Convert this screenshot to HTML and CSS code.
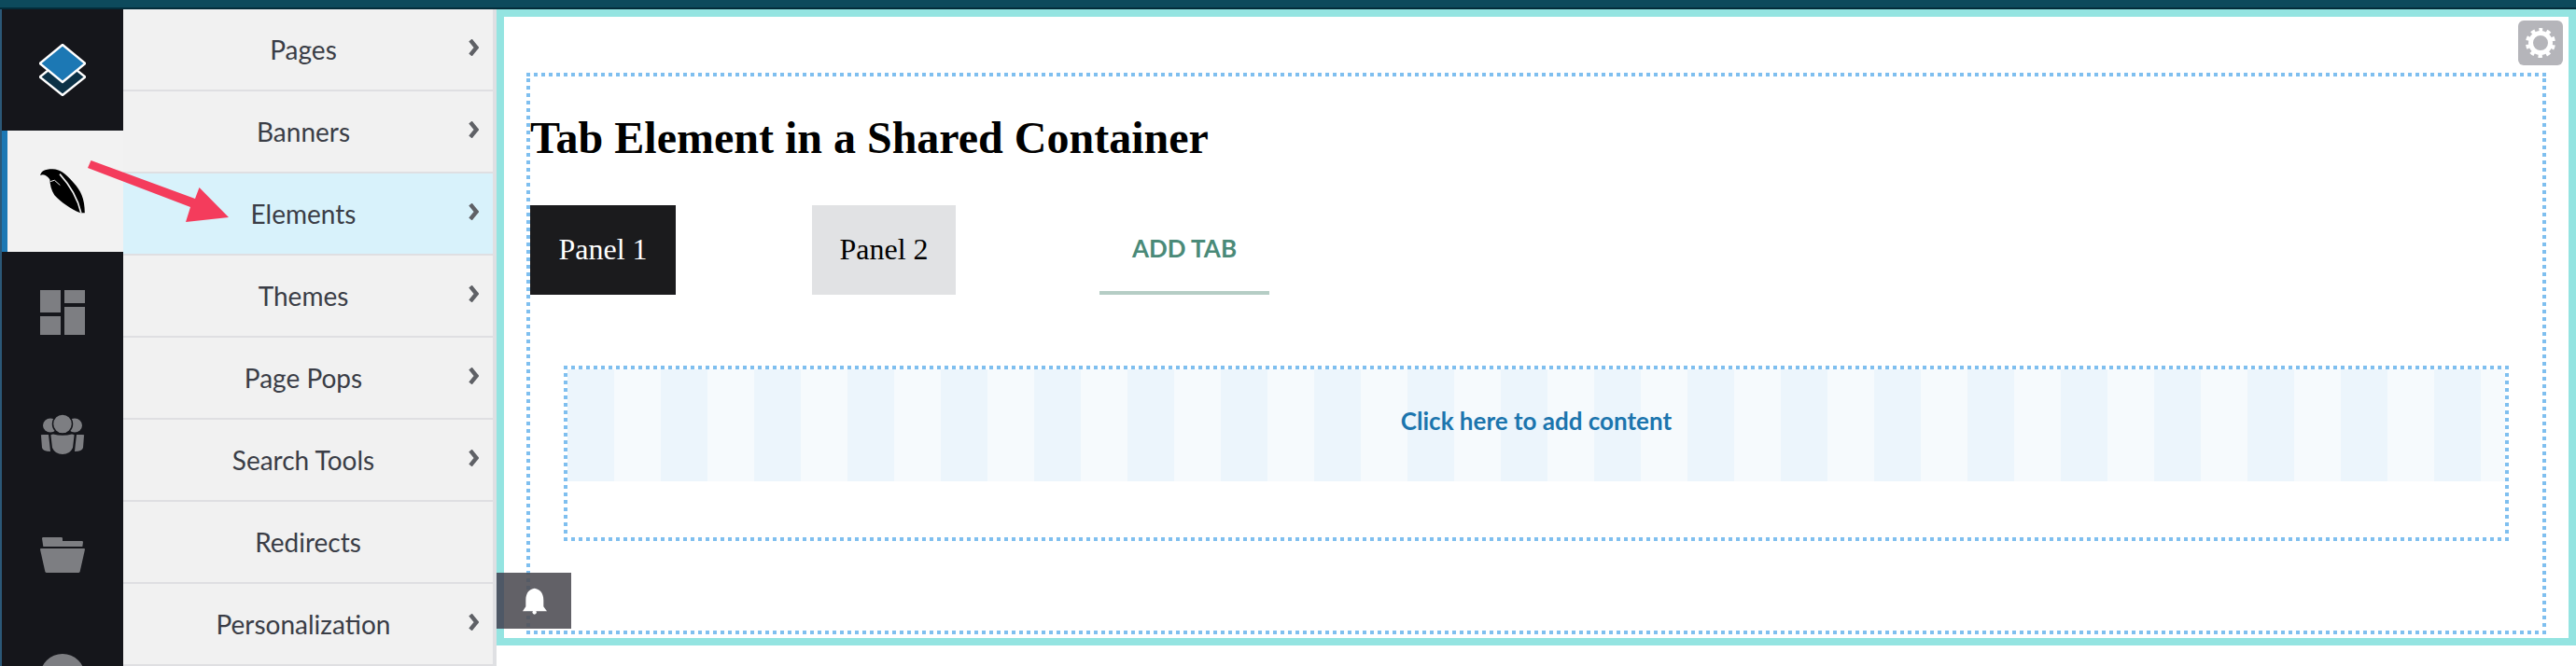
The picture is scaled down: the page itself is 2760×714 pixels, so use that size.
FILE: index.html
```html
<!DOCTYPE html>
<html lang="en">
<head>
    <meta charset="UTF-8">
    <title>Tab Element in a Shared Container</title>
    <link rel="stylesheet" href="styles.css">
</head>
<body>
    <div class="topbar"></div>
    <div class="shell">
        <div class="edge"></div>

        <div class="sidebar">
            <div class="side-item">
                <svg width="50" height="56" viewBox="0 0 50 56">
                    <path d="M25 16 L49.4 35.5 L25 55 L0.6 35.5 Z" fill="#0c3247" stroke="#fff" stroke-width="2.4" stroke-linejoin="round"/>
                    <path d="M25 1 L49.4 21 L25 41 L0.6 21 Z" fill="#1c78b4" stroke="#fff" stroke-width="2.4" stroke-linejoin="round"/>
                </svg>
            </div>
            <div class="side-item active">
                <svg width="48" height="48" viewBox="132 155 144 145">
                    <path d="M132 176 C134 164 145 156 172 156 C196 156 212 170 240 200 C262 224 276 250 276 298 L262 298 C232 285 198 262 178 240 C168 226 163 205 163 190 C156 180 146 170 132 176 Z" fill="#000"/>
                    <path d="M195 172 C225 205 252 245 264 298" fill="none" stroke="#f2f2f2" stroke-width="5"/>
                    <path d="M165 196 L178 192 L196 208" fill="none" stroke="#f2f2f2" stroke-width="3"/>
                </svg>
            </div>
            <div class="side-item">
                <svg width="48" height="48" viewBox="0 0 48 48" fill="#7d7e82">
                    <rect x="0" y="0" width="22" height="24"/>
                    <rect x="26" y="0" width="22" height="14"/>
                    <rect x="0" y="28" width="22" height="20"/>
                    <rect x="26" y="18" width="22" height="30"/>
                </svg>
            </div>
            <div class="side-item">
                <svg width="48" height="43" viewBox="0 0 48 43" fill="#7d7e82">
                    <ellipse cx="11" cy="12" rx="8" ry="7.5"/>
                    <ellipse cx="37" cy="12" rx="8" ry="7.5"/>
                    <circle cx="24" cy="10.5" r="10.5" stroke="#15161b" stroke-width="1.5"/>
                    <path d="M1 23 Q0 22 3 22 L9 22 Q10 30 11 40 Q3 40 2 36 Z"/>
                    <path d="M47 23 Q48 22 45 22 L39 22 Q38 30 37 40 Q45 40 46 36 Z"/>
                    <path d="M11.5 23 Q11 21.5 14 21.5 Q24 24 34 21.5 Q37 21.5 36.5 23 L35 36 Q32 43 24 43 Q16 43 13 36 Z"/>
                </svg>
            </div>
            <div class="side-item">
                <svg width="48" height="38" viewBox="132 108 144 114" fill="#7d7e82">
                    <path d="M138 112 Q138 108 142 108 L200 108 Q204 108 204 112 L204 120 L266 120 Q270 120 270 124 L268 138 L142 138 Z"/>
                    <path d="M132 147 Q132 144 135 144 L273 144 Q276 144 276 147 L260 218 Q259 222 255 222 L153 222 Q149 222 148 218 Z"/>
                </svg>
            </div>
            <div class="side-item">
                <svg width="48" height="48" viewBox="0 0 48 48" fill="#7d7e82">
                    <circle cx="24" cy="24" r="24"/>
                </svg>
            </div>
        </div>

        <div class="menu">
            <div class="menu-row">
                <span class="menu-label has-arrow">Pages</span>
                <svg class="chev" width="11" height="18" viewBox="0 0 11 18"><path d="M2 1 L8.5 9 L2 17"/></svg>
            </div>
            <div class="menu-row">
                <span class="menu-label has-arrow">Banners</span>
                <svg class="chev" width="11" height="18" viewBox="0 0 11 18"><path d="M2 1 L8.5 9 L2 17"/></svg>
            </div>
            <div class="menu-row current">
                <span class="menu-label has-arrow">Elements</span>
                <svg class="chev" width="11" height="18" viewBox="0 0 11 18"><path d="M2 1 L8.5 9 L2 17"/></svg>
            </div>
            <div class="menu-row">
                <span class="menu-label has-arrow">Themes</span>
                <svg class="chev" width="11" height="18" viewBox="0 0 11 18"><path d="M2 1 L8.5 9 L2 17"/></svg>
            </div>
            <div class="menu-row">
                <span class="menu-label has-arrow">Page Pops</span>
                <svg class="chev" width="11" height="18" viewBox="0 0 11 18"><path d="M2 1 L8.5 9 L2 17"/></svg>
            </div>
            <div class="menu-row">
                <span class="menu-label has-arrow">Search Tools</span>
                <svg class="chev" width="11" height="18" viewBox="0 0 11 18"><path d="M2 1 L8.5 9 L2 17"/></svg>
            </div>
            <div class="menu-row">
                <span class="menu-label">Redirects</span>
            </div>
            <div class="menu-row">
                <span class="menu-label has-arrow">Personalization</span>
                <svg class="chev" width="11" height="18" viewBox="0 0 11 18"><path d="M2 1 L8.5 9 L2 17"/></svg>
            </div>
        </div>

        <div class="stage">
            <div class="frame">
                <div class="gear">
                    <svg width="32" height="32" viewBox="0 0 32 32" fill="none" stroke="#fff">
                        <circle cx="16" cy="16" r="10.5" stroke-width="5"/>
                        <circle cx="16" cy="16" r="14" stroke-width="4" stroke-dasharray="4.4 4.4" stroke-dashoffset="2.2" transform="rotate(-90 16 16)"/>
                    </svg>
                </div>

                <div class="container dots">
                    <h1>Tab Element in a Shared Container</h1>
                    <div class="tabs">
                        <div class="tab tab-on">Panel 1</div>
                        <div class="tab tab-off">Panel 2</div>
                        <div class="tab-add">ADD TAB</div>
                    </div>
                    <div class="dropzone dots">
                        <div class="stripes">Click here to add content</div>
                    </div>
                </div>

                <div class="bell">
                    <svg width="26" height="29" viewBox="120 88 78 86" fill="#fff">
                        <path d="M158 90 C142 92 130 104 130 128 L130 148 L120 163 L198 163 L187 148 L187 128 C187 104 174 92 158 90 Z"/>
                        <circle cx="158" cy="167" r="6.5"/>
                    </svg>
                </div>
            </div>
        </div>
    </div>

    <svg class="arrow" width="250" height="240" viewBox="0 0 250 240">
        <polygon points="97.5,172 209,213 213.5,201 245,233 199,238 204,222 94,180" fill="#f43c5c"/>
    </svg>
</body>
</html>
```

FILE: styles.css
```css
html, body {
    margin: 0;
    padding: 0;
    height: 714px;
    overflow: hidden;
    background-color: #fff;
}
body {
    position: relative;
    font-family: "Lato", sans-serif;
}
.topbar {
    height: 8px;
    background-color: #0d4a5c;
    border-bottom: 2px solid #032c3a;
}
.shell {
    display: flex;
    height: 704px;
    overflow: hidden;
}
.edge {
    width: 2px;
    background-color: #2b5878;
}

/* dark icon column */
.sidebar {
    width: 130px;
    background-color: #15161b;
    overflow: hidden;
}
.side-item {
    height: 130px;
    display: flex;
    align-items: center;
    justify-content: center;
    box-sizing: border-box;
}
.side-item.active {
    background-color: #f2f2f2;
    border-left: 6px solid #1c78b4;
    padding-right: 6px;
}

/* menu column */
.menu {
    width: 396px;
    background-color: #f1f1f1;
    border-right: 4px solid #dfe0e3;
}
.menu-row {
    height: 88px;
    box-sizing: border-box;
    display: flex;
    align-items: center;
    border-bottom: 2px solid #dfdfe2;
    color: #3a3d46;
    font-size: 28px;
}
.menu-row.current {
    background-color: #d8f2fb;
}
.menu-label {
    flex: 1;
    text-align: center;
}
.menu-label.has-arrow {
    padding-left: 16px;
}
.chev {
    margin-right: 15px;
    margin-top: -5px;
    fill: none;
    stroke: #5f6166;
    stroke-width: 4.4;
    stroke-linejoin: miter;
}

/* page preview */
.stage {
    flex: 1;
    height: 682px;
}
.frame {
    position: relative;
    height: 100%;
    box-sizing: border-box;
    border: 8px solid #94e4e1;
    background-color: #fff;
    padding: 60px 24px 0;
}
.dots {
    background-image:
        repeating-linear-gradient(90deg, #7fbfef 0 4px, transparent 4px 8px),
        repeating-linear-gradient(90deg, #7fbfef 0 4px, transparent 4px 8px),
        repeating-linear-gradient(0deg, #7fbfef 0 4px, transparent 4px 8px),
        repeating-linear-gradient(0deg, #7fbfef 0 4px, transparent 4px 8px);
    background-size: 100% 4px, 100% 4px, 4px 100%, 4px 100%;
    background-position: left top, left bottom, left top, right top;
    background-repeat: no-repeat;
}
.container {
    height: 602px;
    box-sizing: border-box;
    padding: 4px;
}
h1 {
    margin: 36px 0 0;
    font-family: "Liberation Serif", serif;
    font-size: 48px;
    line-height: 60px;
    font-weight: bold;
    color: #000;
}
.tabs {
    display: flex;
    margin-top: 42px;
    height: 96px;
}
.tab {
    box-sizing: border-box;
    padding-bottom: 2px;
    display: flex;
    align-items: center;
    justify-content: center;
    font-family: "Liberation Serif", serif;
    font-size: 32px;
}
.tab-on {
    width: 156px;
    background-color: #1b1b1d;
    color: #fff;
}
.tab-off {
    width: 154px;
    margin-left: 146px;
    background-color: #e1e2e4;
    color: #000;
}
.tab-add {
    width: 182px;
    margin-left: 154px;
    box-sizing: border-box;
    display: flex;
    align-items: center;
    justify-content: center;
    border-bottom: 4px solid #b5cdc5;
    color: #4a8a78;
    font-size: 26px;
    font-weight: bold;
}
.dropzone {
    margin: 76px 36px 0;
    height: 188px;
    box-sizing: border-box;
    padding: 4px 4px 0;
}
.stripes {
    height: 120px;
    box-sizing: border-box;
    padding-bottom: 10px;
    display: flex;
    align-items: center;
    justify-content: center;
    background-image: repeating-linear-gradient(90deg, #ecf5fc 0 50px, #f6fafd 50px 100px);
    color: #1c75ae;
    font-size: 26px;
    font-weight: bold;
}
.gear {
    position: absolute;
    top: 4px;
    right: 6px;
    width: 48px;
    height: 48px;
    display: flex;
    align-items: center;
    justify-content: center;
    border-radius: 6px;
    background-color: #b5b5ba;
}
.bell {
    position: absolute;
    left: -8px;
    top: 596px;
    width: 80px;
    height: 60px;
    box-sizing: border-box;
    padding-right: 6px;
    display: flex;
    align-items: center;
    justify-content: center;
    border-left: 8px solid #4e5866;
    background-color: rgba(81, 80, 86, 0.9);
}
.arrow {
    position: absolute;
    left: 0;
    top: 0;
}
```
